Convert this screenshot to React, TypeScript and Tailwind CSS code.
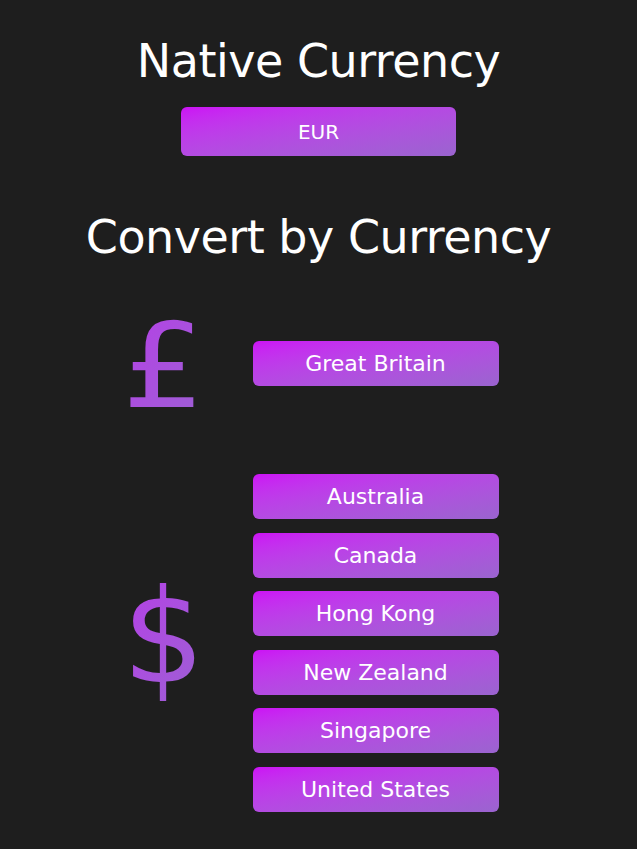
const gbp = ['Great Britain'];
const usd = ['Australia', 'Canada', 'Hong Kong', 'New Zealand', 'Singapore', 'United States'];

function CountryButton({ name }: { name: string }) {
  return (
    <button
      type="button"
      className="w-[246px] h-[45px] rounded-md bg-linear-to-br from-[#cc0ff5] to-[#9a64cf] text-white text-[22px]"
    >
      {name}
    </button>
  );
}

function Group({ symbol, names, symbolClass }: { symbol: string; names: string[]; symbolClass: string }) {
  return (
    <div className="flex items-center justify-center pr-5 gap-[44px]">
      <div className="w-[90px] flex justify-center">
        <span
          className={`bg-linear-to-br from-[#b63ce8] to-[#9c5fd3] bg-clip-text text-transparent leading-none ${symbolClass}`}
        >
          {symbol}
        </span>
      </div>
      <div className="flex flex-col gap-[13.5px]">
        {names.map((n) => (
          <CountryButton key={n} name={n} />
        ))}
      </div>
    </div>
  );
}

export default function App() {
  return (
    <div
      className="min-h-screen bg-[#1e1e1e] flex flex-col items-center pt-[38px] text-white"
      style={{ fontFamily: '"DejaVu Sans", sans-serif' }}
    >
      <h1 className="text-[46px] leading-none tracking-[-0.5px]">Native Currency</h1>
      <button
        type="button"
        className="mt-[23px] w-[275px] h-[49px] rounded-md bg-linear-to-br from-[#cc0ff5] to-[#9a64cf] text-white text-[20px]"
      >
        EUR
      </button>
      <h2 className="mt-[58px] text-[46px] leading-none tracking-[-0.5px]">Convert by Currency</h2>

      <div className="mt-[44px] w-full">
        <Group symbol="£" names={gbp} symbolClass="text-[118px] scale-x-110 translate-y-[3px]" />
      </div>
      <div className="mt-[52px] w-full">
        <Group symbol="$" names={usd} symbolClass="text-[130px] mb-3" />
      </div>
    </div>
  );
}
